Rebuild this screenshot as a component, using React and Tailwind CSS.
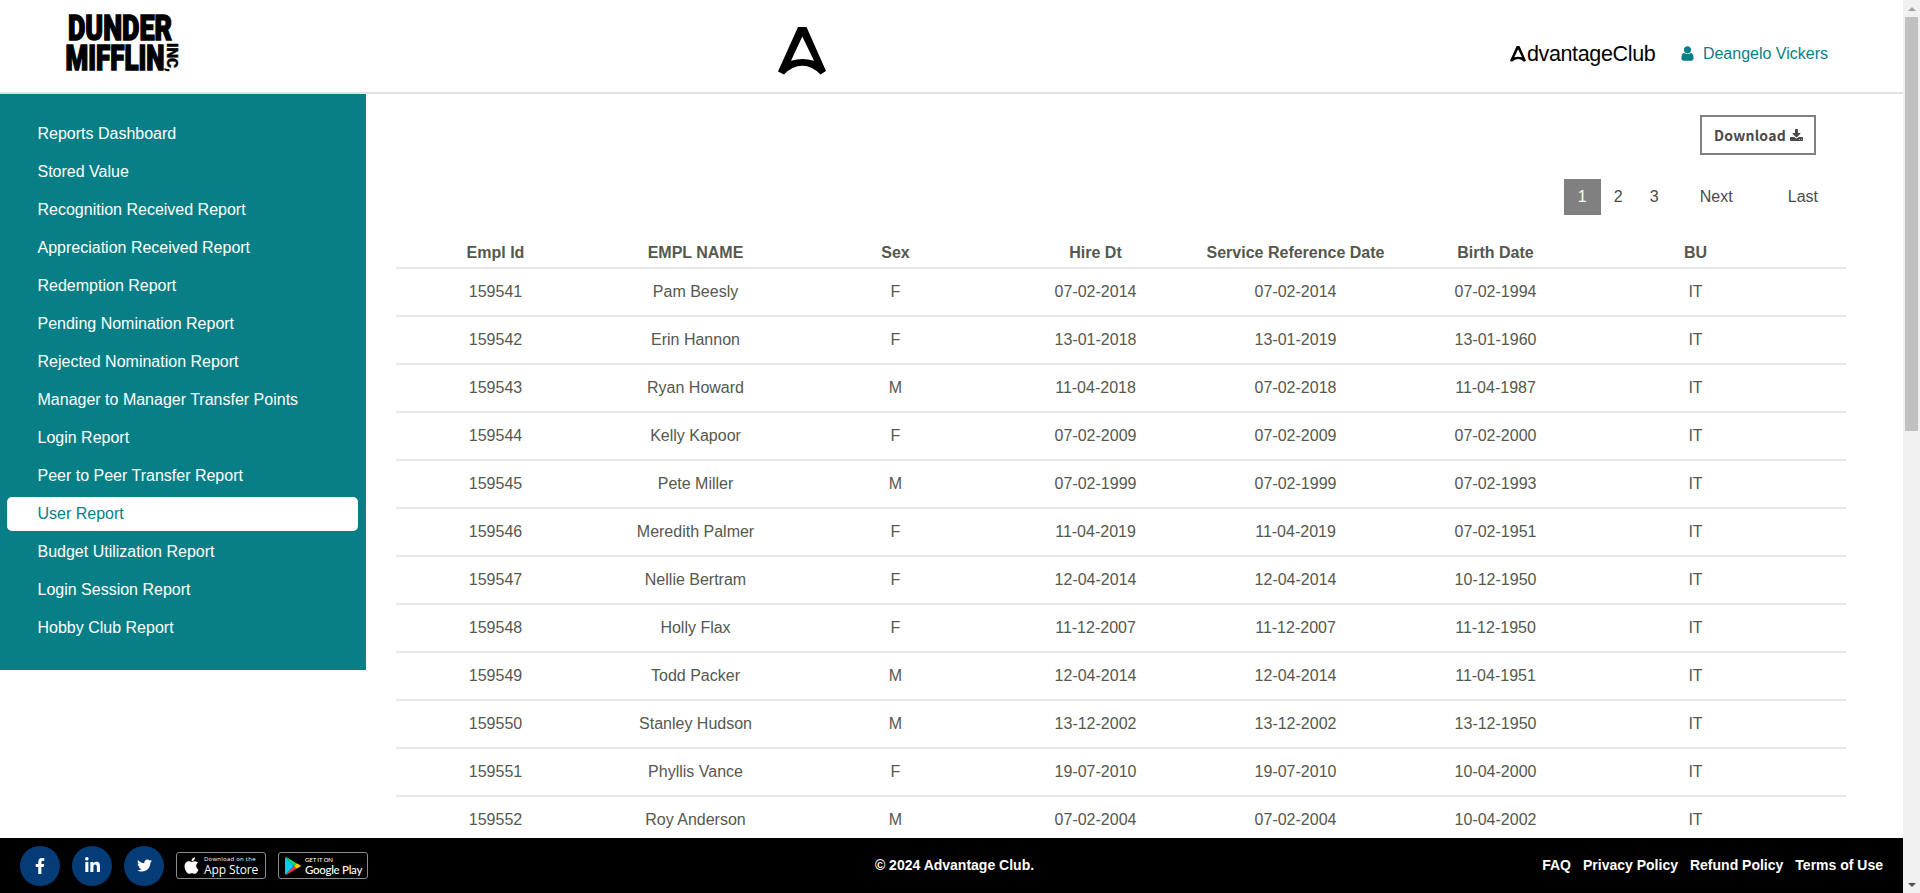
import React from "react";
import { FaFacebookF, FaLinkedinIn, FaTwitter, FaApple } from "react-icons/fa";

const menu = [
  "Reports Dashboard",
  "Stored Value",
  "Recognition Received Report",
  "Appreciation Received Report",
  "Redemption Report",
  "Pending Nomination Report",
  "Rejected Nomination Report",
  "Manager to Manager Transfer Points",
  "Login Report",
  "Peer to Peer Transfer Report",
  "User Report",
  "Budget Utilization Report",
  "Login Session Report",
  "Hobby Club Report",
];

const columns = ["Empl Id", "EMPL NAME", "Sex", "Hire Dt", "Service Reference Date", "Birth Date", "BU"];

const rows = [
  ["159541", "Pam Beesly", "F", "07-02-2014", "07-02-2014", "07-02-1994", "IT"],
  ["159542", "Erin Hannon", "F", "13-01-2018", "13-01-2019", "13-01-1960", "IT"],
  ["159543", "Ryan Howard", "M", "11-04-2018", "07-02-2018", "11-04-1987", "IT"],
  ["159544", "Kelly Kapoor", "F", "07-02-2009", "07-02-2009", "07-02-2000", "IT"],
  ["159545", "Pete Miller", "M", "07-02-1999", "07-02-1999", "07-02-1993", "IT"],
  ["159546", "Meredith Palmer", "F", "11-04-2019", "11-04-2019", "07-02-1951", "IT"],
  ["159547", "Nellie Bertram", "F", "12-04-2014", "12-04-2014", "10-12-1950", "IT"],
  ["159548", "Holly Flax", "F", "11-12-2007", "11-12-2007", "11-12-1950", "IT"],
  ["159549", "Todd Packer", "M", "12-04-2014", "12-04-2014", "11-04-1951", "IT"],
  ["159550", "Stanley Hudson", "M", "13-12-2002", "13-12-2002", "13-12-1950", "IT"],
  ["159551", "Phyllis Vance", "F", "19-07-2010", "19-07-2010", "10-04-2000", "IT"],
  ["159552", "Roy Anderson", "M", "07-02-2004", "07-02-2004", "10-04-2002", "IT"],
];

function CompanyLogo() {
  return (
    <svg width="116" height="64" viewBox="0 0 116 64" className="mb-[6px] ml-[64px] overflow-visible" fontFamily="Roboto, 'Liberation Sans', sans-serif" fontWeight="900" fill="#000" stroke="#000">
      <text x="4" y="29" fontSize="35.5" textLength="104" lengthAdjust="spacingAndGlyphs" strokeWidth="1.5">DUNDER</text>
      <text x="1.5" y="58.5" fontSize="35.5" textLength="99" lengthAdjust="spacingAndGlyphs" strokeWidth="1.500">MIFFLIN</text>
      <text transform="translate(103 32) rotate(90)" fontSize="15" textLength="29" lengthAdjust="spacingAndGlyphs" strokeWidth="0.4">INC,</text>
    </svg>
  );
}

function AMark({ className }) {
  return (
    <svg viewBox="0 0 48 48" className={className}>
      <path d="M20 0H28.500L48 44L42.500 47.500Q34 38.700 24.500 38.700Q14 38.700 6 47.500L0 44.500Z M24.300 9.500L13 33.800Q24 30.200 36 33.800Z" fill="#000" fillRule="evenodd" />
    </svg>
  );
}

function UserIcon() {
  return (
    <svg viewBox="0 0 1280 1792" className="mb-px h-[17px] w-[13px]" fill="currentColor">
      <path d="M1280 1399q0 109-62.500 187t-150.500 78h-854q-88 0-150.500-78t-62.500-187q0-85 8.500-160.500t31.500-152 58.500-131 94-89 134.500-34.500q131 128 313 128t313-128q76 0 134.500 34.500t94 89 58.500 131 31.500 152 8.500 160.500zm-256-887q0 159-112.500 271.500t-271.500 112.500-271.500-112.500-112.500-271.500 112.500-271.500 271.500-112.500 271.500 112.500 112.500 271.500z" />
    </svg>
  );
}

function DownloadIcon() {
  return (
    <svg viewBox="64 0 1664 1664" className="size-[13px]" fill="currentColor">
      <path d="M1344 1344q0-26-19-45t-45-19-45 19-19 45 19 45 45 19 45-19 19-45zm256 0q0-26-19-45t-45-19-45 19-19 45 19 45 45 19 45-19 19-45zm128-224v320q0 40-28 68t-68 28h-1472q-40 0-68-28t-28-68v-320q0-40 28-68t68-28h465l135 136q58 56 136 56t136-56l136-136h464q40 0 68 28t28 68zm-325-569q17 41-14 70l-448 448q-18 19-45 19t-45-19l-448-448q-31-29-14-70 17-39 59-39h256v-448q0-26 19-45t45-19h256q26 0 45 19t19 45v448h256q42 0 59 39z" />
    </svg>
  );
}

function PlayIcon() {
  return (
    <svg viewBox="0 0 16 18" className="h-[18px] w-[16px] shrink-0">
      <path d="M0.500 0.300L9 9L0.500 17.700Q0 17.400 0 16.500V1.500Q0 0.600 0.500 0.300Z" fill="#00cdfb" />
      <path d="M0.500 0.300Q1 0 2 0.600L11.500 6.200L9 9Z" fill="#00e676" />
      <path d="M0.500 17.700Q1 18 2 17.400L11.500 11.800L9 9Z" fill="#f6384a" />
      <path d="M11.500 6.200L15.300 8.300Q16.200 9 15.300 9.700L11.500 11.800L9 9Z" fill="#ffc900" />
    </svg>
  );
}

function Header() {
  return (
    <header className="flex h-[94px] shrink-0 items-center border-b-2 border-[#e2e2e2] bg-white">
      <div className="w-[777.5px] shrink-0"><CompanyLogo /></div>
      <AMark className="mt-[10px] size-[48px] shrink-0" />
      <div className="mt-[15px] flex flex-1 items-center justify-end pr-[75px]">
        <div className="flex items-center text-[21.5px] leading-6 tracking-[-0.35px] text-black">
          <AMark className="mr-px size-[16px]" />
          <span>dvantageClub</span>
        </div>
        <div className="ml-[25.5px] flex items-center gap-[9px] text-base text-[#087f86]">
          <UserIcon />
          <span>Deangelo Vickers</span>
        </div>
      </div>
    </header>
  );
}

function Sidebar() {
  return (
    <nav className="flex h-[576px] w-[366px] shrink-0 flex-col gap-1 bg-[#087f86] px-[7px] pt-[23px]">
      {menu.map((item) => (
        <a
          key={item}
          className={
            item === "User Report"
              ? "mr-px flex h-[34px] items-center rounded-[5px] bg-white pl-[30.5px] text-base text-[#087f86]"
              : "mr-px flex h-[34px] items-center rounded-[5px] pl-[30.5px] text-base text-white"
          }
        >
          {item}
        </a>
      ))}
    </nav>
  );
}

function Report() {
  return (
    <main className="ml-[30px] flex w-[1450px] flex-col text-[#54584e]">
      <div className="flex justify-end pr-[30px] pt-[21px]">
        <button className="flex h-[40px] w-[116px] items-center justify-center gap-1 border-2 border-[#808080] pl-px font-['Noto_Sans_CJK_SC',sans-serif] text-[14px] font-bold tracking-[0.25px] text-[#4a4a4a]">
          Download
          <DownloadIcon />
        </button>
      </div>
      <div className="mt-6 flex h-9 justify-end pr-[28px] text-base text-[#4a4a4a]">
        <span className="flex w-[37px] items-center justify-center bg-[#808080] text-white">1</span>
        <span className="flex w-[35px] items-center justify-center">2</span>
        <span className="flex w-[37px] items-center justify-center">3</span>
        <span className="ml-[27px] flex w-[88px] items-center">Next</span>
        <span className="flex items-center">Last</span>
      </div>
      <div className="mt-[22px] grid h-[32px] grid-cols-[repeat(7,200px)] border-b-2 border-[#e8e8e8] pt-[2px] text-base font-bold">
        {columns.map((c) => (
          <span key={c} className="flex items-center justify-center pr-px whitespace-nowrap">{c}</span>
        ))}
      </div>
      {rows.map((row) => (
        <div key={row[0]} className="grid h-12 shrink-0 grid-cols-[repeat(7,200px)] border-b-2 border-[#e8e8e8] text-base">
          {row.map((cell, i) => (
            <span key={i} className="flex items-center justify-center pr-px">{cell}</span>
          ))}
        </div>
      ))}
    </main>
  );
}

function Footer() {
  return (
    <footer className="grid h-[55px] shrink-0 grid-cols-[1fr_auto_1fr] items-center bg-black px-5 text-sm font-bold text-white">
      <div className="flex items-center gap-3">
        <span className="flex size-10 items-center justify-center rounded-full bg-[#043c78]"><FaFacebookF className="size-4" /></span>
        <span className="flex size-10 items-center justify-center rounded-full bg-[#043c78]"><FaLinkedinIn className="size-[17px]" /></span>
        <span className="flex size-10 items-center justify-center rounded-full bg-[#043c78]"><FaTwitter className="size-[15px]" /></span>
        <span className="flex h-[27px] w-[90px] items-center gap-[3px] rounded-[3px] border border-[#8a8a8a] pl-[5px] font-['Open_Sans',sans-serif] font-medium">
          <FaApple className="size-[19px] shrink-0" />
          <span className="flex flex-col">
            <span className="text-[6px] leading-[7px] tracking-[0.25px] whitespace-nowrap">Download on the</span>
            <span className="text-[12px] leading-[13px] tracking-[-0.1px] whitespace-nowrap">App Store</span>
          </span>
        </span>
        <span className="flex h-[27px] w-[90px] items-center gap-[4px] rounded-[3px] border border-[#8a8a8a] pl-[6px] font-['Lato',sans-serif] font-medium">
          <PlayIcon />
          <span className="flex flex-col">
            <span className="text-[6px] leading-[7px] tracking-[-0.1px] whitespace-nowrap">GET IT ON</span>
            <span className="text-[11.5px] leading-[13px] tracking-[-0.3px] whitespace-nowrap">Google Play</span>
          </span>
        </span>
      </div>
      <p className="mb-px pl-[6px]">© 2024 Advantage Club.</p>
      <div className="mb-px flex justify-end gap-3">
        <a>FAQ</a>
        <a>Privacy Policy</a>
        <a>Refund Policy</a>
        <a>Terms of Use</a>
      </div>
    </footer>
  );
}

function Scrollbar() {
  return (
    <div className="flex h-full w-[17px] shrink-0 flex-col items-center justify-between bg-[#f1f1f1]">
      <div className="flex flex-col items-center">
        <span className="flex h-[17px] items-center"><svg viewBox="0 0 8 4" className="h-1 w-2"><path d="M0 4L4 0L8 4Z" fill="#a3a3a3" /></svg></span>
        <span className="h-[414px] w-[13px] bg-[#c1c1c1]" />
      </div>
      <span className="flex h-[17px] items-center"><svg viewBox="0 0 8 4" className="h-1 w-2"><path d="M0 0L4 4L8 0Z" fill="#505050" /></svg></span>
    </div>
  );
}

export default function App() {
  return (
    <div className="flex h-[893px] w-[1920px] overflow-hidden bg-white font-['Liberation_Sans',Arial,sans-serif]">
      <div className="flex w-[1903px] flex-col">
        <Header />
        <div className="flex h-[744px] shrink-0 items-start overflow-hidden">
          <Sidebar />
          <Report />
        </div>
        <Footer />
      </div>
      <Scrollbar />
    </div>
  );
}
